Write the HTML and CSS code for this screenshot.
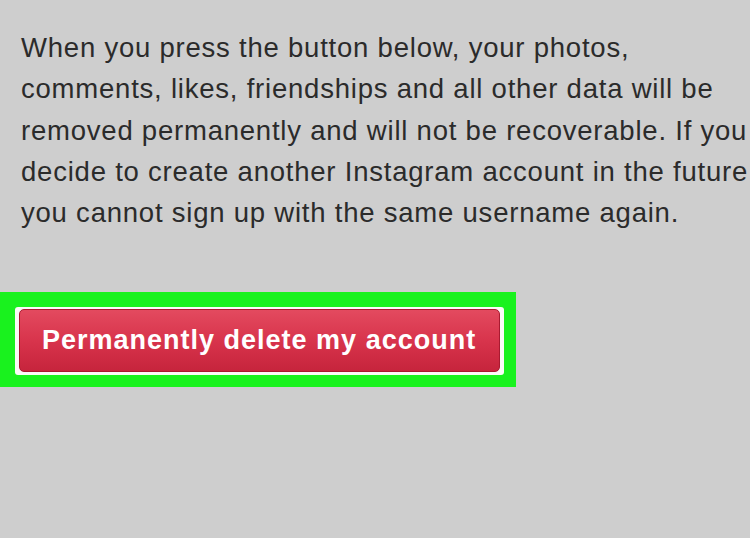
FILE: index.html
```html
<!DOCTYPE html>
<html>
<head>
<meta charset="utf-8">
<link rel="stylesheet" href="styles.css">
</head>
<body>
<main class="page">
  <p class="notice">When you press the button below, your photos,<br>comments, likes, friendships and all other data will be<br>removed permanently and will not be recoverable. If you<br>decide to create another Instagram account in the future<br>you cannot sign up with the same username again.</p>
  <div class="highlight">
    <div class="btn-frame">
      <button class="delete-btn">Permanently delete my account</button>
    </div>
  </div>
</main>
</body>
</html>
```
FILE: styles.css
```css
html, body {
  margin: 0;
  padding: 0;
  background: #cecece;
  overflow: hidden;
}
.page {
  width: 750px;
  height: 538px;
  background: #cecece;
  overflow: hidden;
}
.notice {
  margin: 0;
  padding: 27px 0 0 21px;
  font-family: "Liberation Sans", Arial, sans-serif;
  font-size: 27.5px;
  line-height: 41.3px;
  letter-spacing: 0.78px;
  color: #2b2b2b;
  white-space: nowrap;
}
.highlight {
  margin-top: 59px;
  width: 489px;
  padding: 15px 12px 12px 15px;
  background: #19f21e;
}
.btn-frame {
  display: inline-block;
  background: #fbfbf8;
  padding: 2px 4px 3px 4px;
  border-radius: 3px;
}
.delete-btn {
  display: block;
  width: 481px;
  height: 63px;
  border: 1px solid #a81a30;
  border-radius: 5px;
  background: linear-gradient(#e34a5f, #d8344c 50%, #c6243c);
  color: #fff;
  font-family: "Liberation Sans", Arial, sans-serif;
  font-weight: bold;
  font-size: 27px;
  text-align: left;
  padding: 0 0 0 22px;
  letter-spacing: 1px;
}
```
